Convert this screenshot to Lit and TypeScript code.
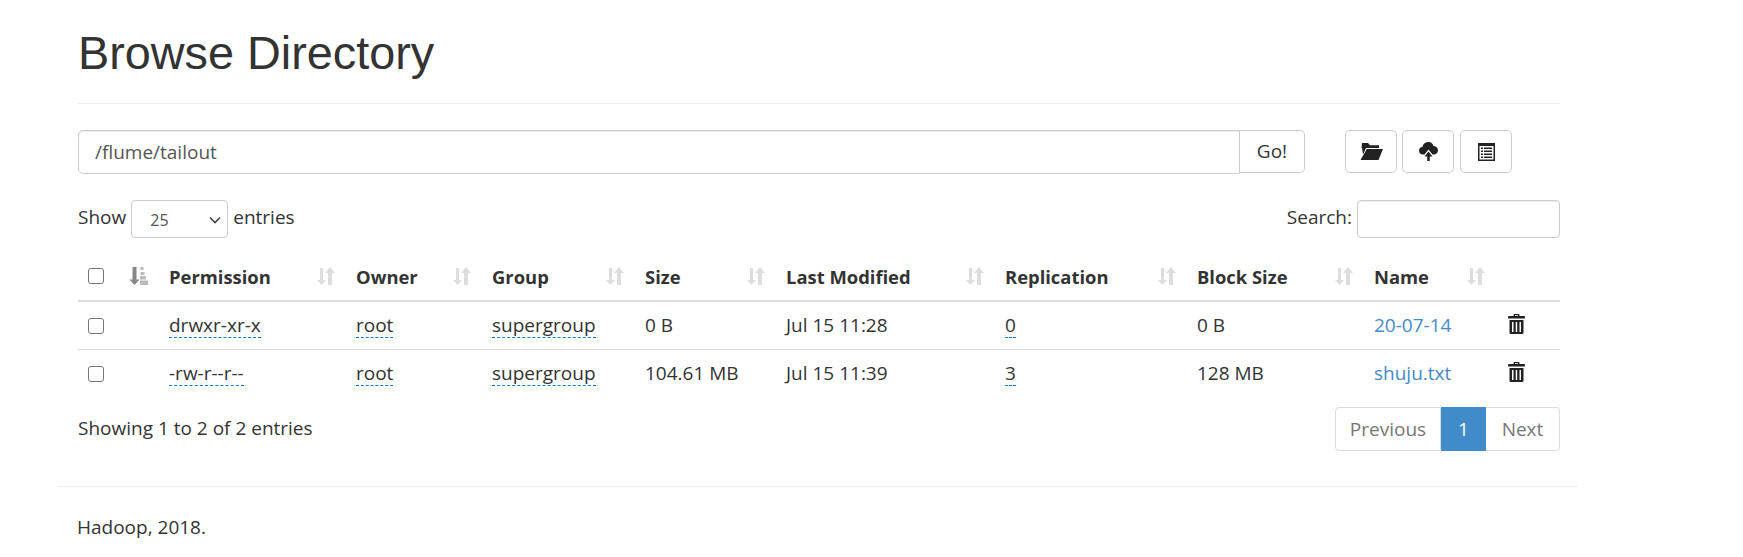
import { LitElement, html, css } from "lit";
import { customElement } from "lit/decorators.js";

const sortIcon = html`<svg class="sort" viewBox="0 0 18 18" width="18" height="18"><path d="M3 1h3v12h3l-4.500 5L0 13h3z M13 0l5 6h-3v12h-4V6H8z" fill="currentColor"/></svg>`;
const sortAsc = html`<svg class="sortasc" viewBox="0 0 20 20" width="20" height="20"><path d="M3.500 1h4v12.500h3l-5 5.500-5-5.500h3z" fill="#888"/><path d="M11.500 1h3v3h-3zM11.500 6h4v3h-4zM11 10h6v3.500h-6zM11 14.500h8V19h-8z" fill="#bbb"/></svg>`;
const trash = html`<svg class="trash" viewBox="0 0 17 20" width="17" height="20"><path fill="#222" fill-rule="evenodd" d="M5.500 2V1q0-1 1-1h4q1 0 1 1v1h4.500q1 0 1 1v1.500H0V3q0-1 1-1zM7 1.200V2h3v-.8zM1.500 6h14v12.500q0 1.500-1.500 1.500H3q-1.500 0-1.500-1.500zM4 8v10h1.500V8zM7.700 8v10h1.500V8zM11.500 8v10H13V8z"/></svg>`;
const folder = html`<svg viewBox="0 0 23 17" width="23" height="17"><path fill="#222" d="M2 0h6l2 2.200h9v2.800H6L3 11.500 2 5H1.500zM6.800 6H23l-4.500 11H.5z"/></svg>`;
const upload = html`<svg viewBox="0 0 19 19" width="19" height="19"><path fill="#222" d="M9.500 0c2.700 0 4.600 1.700 5 4 2.400 0 4.500 1.800 4.500 4.300 0 2.500-1.800 4.200-4.200 4.200h-1.300L9.500 7.500 5.500 12.500H4c-2.400 0-4-1.800-4-4.100C0 6.500 1.500 5 3.500 4.700 4 2 6.500 0 9.500 0z"/><path fill="#222" d="M9.500 9.500l4 5h-2.700V19H8.200v-4.500H5.500z"/></svg>`;
const list = html`<svg viewBox="0 0 17 18" width="17" height="18"><path fill="#222" fill-rule="evenodd" d="M0 0h17v18H0zM1.500 3v13.500h14V3zM3 4.500h2v1.500H3zM6 4.500h8v1.500H6zM3 7.500h2V9H3zM6 7.500h8V9H6zM3 10.500h2V12H3zM6 10.500h8V12H6zM3 13.500h2V15H3zM6 13.500h8V15H6z"/></svg>`;

const cols = ["Permission", "Owner", "Group", "Size", "Last Modified", "Replication", "Block Size", "Name"];
const rows = [
  { perm: "drwxr-xr-x", owner: "root", group: "supergroup", size: "0 B", mod: "Jul 15 11:28", rep: "0", block: "0 B", name: "20-07-14" },
  { perm: "-rw-r--r--", owner: "root", group: "supergroup", size: "104.61 MB", mod: "Jul 15 11:39", rep: "3", block: "128 MB", name: "shuju.txt" },
];

@customElement("app-root")
export class AppRoot extends LitElement {
  static styles = css`
    :host {
      display: block;
      font-family: "Open Sans", "Noto Sans", sans-serif;
      font-size: 19px;
      line-height: 23px;
      color: #333;
      background: #fff;
      height: 557px;
      overflow: hidden;
    }
    .container { width: 1482px; margin-left: 78px; }
    h1 {
      font-family: "Liberation Sans", sans-serif;
      font-weight: 400;
      font-size: 46.800px;
      line-height: 50px;
      margin: 0;
      padding: 28px 0 25px;
      color: #333;
      border-bottom: 1px solid #eee;
    }
    .toolbar { display: flex; margin-top: 26px; height: 44px; }
    .path {
      width: 1162px; box-sizing: border-box; height: 44px;
      border: 1px solid #ccc; border-radius: 5px 0 0 5px;
      padding: 0 16px; display: flex; align-items: center;
      color: #555; box-shadow: inset 0 1px 1px rgba(0,0,0,.075);
    }
    .go {
      width: 65px; box-sizing: border-box; height: 43px;
      border: 1px solid #ccc; border-left: 0; border-radius: 0 5px 5px 0;
      display: flex; align-items: center; justify-content: center;
    }
    .icons { display: flex; gap: 5px; margin-left: 40px; }
    .ib {
      width: 52px; height: 43px; box-sizing: border-box;
      border: 1px solid #ccc; border-radius: 5px;
      display: flex; align-items: center; justify-content: center;
    }
    .ib:last-child { margin-left: 1px; }
    .controls {
      display: flex; justify-content: space-between; align-items: center;
      margin-top: 26px; height: 38px;
    }
    .group { display: flex; align-items: center; gap: 5px; }
    .lbl { padding-bottom: 4px; }
    .select {
      width: 97px; height: 38px; box-sizing: border-box;
      border: 1px solid #ccc; border-radius: 4px;
      display: flex; align-items: center; justify-content: space-between;
      padding: 2px 6px 0 18px; font-size: 16px; color: #555;
    }
    .searchbox {
      width: 203px; height: 38px; box-sizing: border-box;
      border: 1px solid #ccc; border-radius: 4px;
      box-shadow: inset 0 1px 1px rgba(0,0,0,.075);
    }
    table {
      width: 1482px; table-layout: fixed; border-collapse: collapse;
      margin-top: 16px;
    }
    th { font-weight: 700; font-size: 18.400px; text-align: left; height: 47px; padding: 0 11px 2px; box-sizing: border-box; border-bottom: 2px solid #ddd; position: relative; }
    td { height: 47px; padding: 0 11px; border-bottom: 1px solid #ddd; }
    tr:last-child td { border-bottom: 0; }
    .sort { position: absolute; right: 10px; top: 13px; color: #ddd; }
    .sortasc { display: block; margin-left: -2px; }
    .check {
      width: 16px; height: 16px; box-sizing: border-box; display: block; margin-left: -1px;
      border: 1px solid #767676; border-radius: 3px; background: #fff;
    }
    .abbr { border-bottom: 1px dashed #0a78c8; padding-bottom: 0; display: inline-block; line-height: 24px; }
    .trash { margin-left: 2px; vertical-align: -2px; }
    a { color: #428bca; text-decoration: none; }
    .foot { display: flex; justify-content: space-between; align-items: center; margin-top: 10px; height: 44px; }
    .foot .info { padding-bottom: 2px; }
    .pager { display: flex; height: 44px; box-sizing: border-box; }
    .pg {
      display: flex; align-items: center; justify-content: center;
      border: 1px solid #ddd; color: #777; box-sizing: border-box;
    }
    .prev { width: 106px; border-radius: 4px 0 0 4px; }
    .cur { width: 45px; background: #428bca; border-color: #428bca; color: #fff; }
    .next { width: 74px; border-left: 0; border-radius: 0 4px 4px 0; }
    .rule { width: 1520px; margin: 35px 0 0 58px; border-top: 1px solid #eee; }
    .copy { margin: 29px 0 0 77px; }
  `;

  render() {
    return html`
      <div class="container">
        <h1>Browse Directory</h1>
        <div class="toolbar">
          <div class="path">/flume/tailout</div>
          <div class="go">Go!</div>
          <div class="icons">
            <div class="ib">${folder}</div>
            <div class="ib">${upload}</div>
            <div class="ib">${list}</div>
          </div>
        </div>
        <div class="controls">
          <div class="group"><span class="lbl">Show</span>
            <div class="select"><span>25</span>
              <svg width="12" height="8" viewBox="0 0 12 8"><path d="M1 1.500l5 5 5-5" fill="none" stroke="#444" stroke-width="1.600"/></svg>
            </div> <span class="lbl">entries</span></div>
          <div class="group"><span class="lbl">Search:</span> <div class="searchbox"></div></div>
        </div>
        <table>
          <colgroup>
            <col style="width:42px" /><col style="width:38px" />
            <col style="width:187px" /><col style="width:136px" /><col style="width:153px" />
            <col style="width:141px" /><col style="width:219px" /><col style="width:192px" />
            <col style="width:177px" /><col style="width:132px" /><col />
          </colgroup>
          <thead>
            <tr>
              <th><span class="check"></span></th>
              <th>${sortAsc}</th>
              ${cols.map((c) => html`<th>${c}${sortIcon}</th>`)}
              <th></th>
            </tr>
          </thead>
          <tbody>
            ${rows.map((r) => html`
              <tr>
                <td><span class="check"></span></td>
                <td></td>
                <td><span class="abbr">${r.perm}</span></td>
                <td><span class="abbr">${r.owner}</span></td>
                <td><span class="abbr">${r.group}</span></td>
                <td>${r.size}</td>
                <td>${r.mod}</td>
                <td><span class="abbr">${r.rep}</span></td>
                <td>${r.block}</td>
                <td><a>${r.name}</a></td>
                <td>${trash}</td>
              </tr>`)}
          </tbody>
        </table>
        <div class="foot">
          <div class="info">Showing 1 to 2 of 2 entries</div>
          <div class="pager">
            <div class="pg prev">Previous</div>
            <div class="pg cur">1</div>
            <div class="pg next">Next</div>
          </div>
        </div>
      </div>
      <div class="rule"></div>
      <div class="copy">Hadoop, 2018.</div>
    `;
  }
}
